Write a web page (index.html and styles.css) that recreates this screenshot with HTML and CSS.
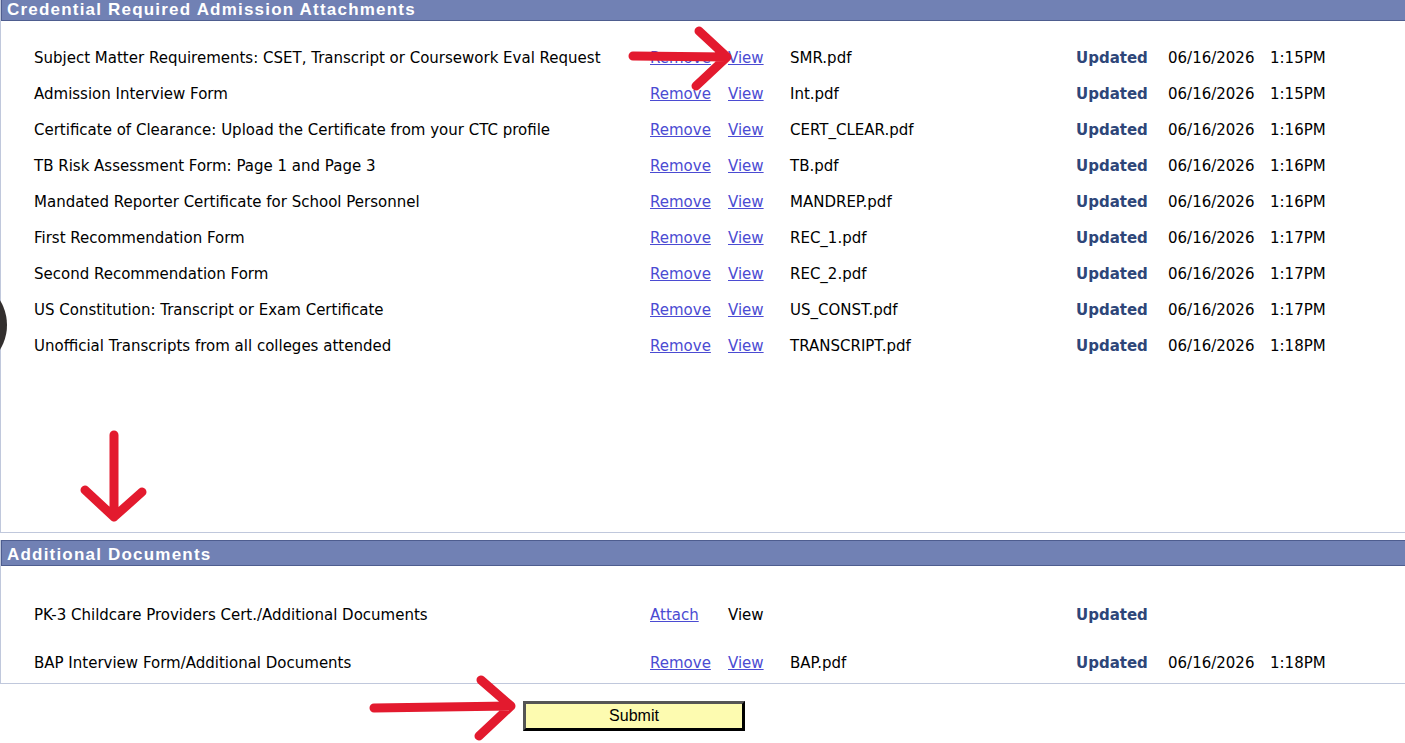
FILE: index.html
```html
<!DOCTYPE html>
<html lang="en">
  <head>
    <meta charset="UTF-8" />
    <meta name="viewport" content="width=device-width, initial-scale=1.0" />
    <title>Admission Attachments</title>
    <link rel="stylesheet" href="styles.css">
  </head>

  <body>
    <div class="page">
      <div class="section section-main">
        <div class="section-title">Credential Required Admission Attachments</div>
        <div class="rows">
          <div class="row">
            <span>Subject Matter Requirements: CSET, Transcript or Coursework Eval Request</span>
            <a href="#">Remove</a><a href="#">View</a><span>SMR.pdf</span>
            <span class="status">Updated</span><span>06/16/2026</span><span>1:15PM</span>
          </div>
          <div class="row">
            <span>Admission Interview Form</span>
            <a href="#">Remove</a><a href="#">View</a><span>Int.pdf</span>
            <span class="status">Updated</span><span>06/16/2026</span><span>1:15PM</span>
          </div>
          <div class="row">
            <span>Certificate of Clearance: Upload the Certificate from your CTC profile</span>
            <a href="#">Remove</a><a href="#">View</a><span>CERT_CLEAR.pdf</span>
            <span class="status">Updated</span><span>06/16/2026</span><span>1:16PM</span>
          </div>
          <div class="row">
            <span>TB Risk Assessment Form: Page 1 and Page 3</span>
            <a href="#">Remove</a><a href="#">View</a><span>TB.pdf</span>
            <span class="status">Updated</span><span>06/16/2026</span><span>1:16PM</span>
          </div>
          <div class="row">
            <span>Mandated Reporter Certificate for School Personnel</span>
            <a href="#">Remove</a><a href="#">View</a><span>MANDREP.pdf</span>
            <span class="status">Updated</span><span>06/16/2026</span><span>1:16PM</span>
          </div>
          <div class="row">
            <span>First Recommendation Form</span>
            <a href="#">Remove</a><a href="#">View</a><span>REC_1.pdf</span>
            <span class="status">Updated</span><span>06/16/2026</span><span>1:17PM</span>
          </div>
          <div class="row">
            <span>Second Recommendation Form</span>
            <a href="#">Remove</a><a href="#">View</a><span>REC_2.pdf</span>
            <span class="status">Updated</span><span>06/16/2026</span><span>1:17PM</span>
          </div>
          <div class="row">
            <span>US Constitution: Transcript or Exam Certificate</span>
            <a href="#">Remove</a><a href="#">View</a><span>US_CONST.pdf</span>
            <span class="status">Updated</span><span>06/16/2026</span><span>1:17PM</span>
          </div>
          <div class="row">
            <span>Unofficial Transcripts from all colleges attended</span>
            <a href="#">Remove</a><a href="#">View</a><span>TRANSCRIPT.pdf</span>
            <span class="status">Updated</span><span>06/16/2026</span><span>1:18PM</span>
          </div>
        </div>
      </div>

      <div class="section section-extra">
        <div class="section-title">Additional Documents</div>
        <div class="rows rows-spaced">
          <div class="row">
            <span>PK-3 Childcare Providers Cert./Additional Documents</span>
            <a href="#">Attach</a><span class="plain">View</span><span></span>
            <span class="status">Updated</span><span></span><span></span>
          </div>
          <div class="row">
            <span>BAP Interview Form/Additional Documents</span>
            <a href="#">Remove</a><a href="#">View</a><span>BAP.pdf</span>
            <span class="status">Updated</span><span>06/16/2026</span><span>1:18PM</span>
          </div>
        </div>
      </div>

      <div class="actions">
        <input type="button" class="submit" value="Submit" />
      </div>
    </div>

    <!-- things drawn on top of the screenshot -->
    <div class="blob"></div>
    <svg class="marks" width="1405" height="743" viewBox="0 0 1405 743">
      <g fill="none" stroke="#e31a2e" stroke-width="9" stroke-linecap="round" stroke-linejoin="round">
        <path d="M633 56 L727 57 M699 31 L727 57 L696 86" />
        <path d="M114 435 L114 517 M85 490 L114 517 L142 492" />
        <path d="M374 708 L511 706 M481 680 L511 706 L479 736" />
      </g>
    </svg>
  </body>
</html>
```

FILE: styles.css
```css
body {
  margin: 0;
  font: normal 15px "DejaVu Sans", Verdana, sans-serif;
  color: #000;
  background-color: #fff;
  overflow: hidden;
}

.page {
  margin-top: -5px;
}

.section {
  border-left: 1px solid #c0c8dc;
  border-bottom: 1px solid #c0c8dc;
}

.section-extra {
  margin-top: 8px;
}

.section-title {
  height: 20px;
  line-height: 20px;
  padding: 4px 0 0 5px;
  background-color: #7181b4;
  border: 1px solid #4e5d8f;
  border-right: none;
  color: #fff;
  font: bold 17px "Liberation Sans", Arial, sans-serif;
  letter-spacing: 1.2px;
}

.section-extra .section-title {
  margin-top: -1px;
}

.rows {
  padding: 19px 0 168px 33px;
}

.rows-spaced {
  padding: 31px 0 2px 33px;
  display: flex;
  flex-direction: column;
  gap: 12px;
}

.row {
  display: grid;
  grid-template-columns: 616px 78px 62px 286px 92px 102px auto;
  height: 36px;
  align-items: center;
  white-space: nowrap;
}

.row a {
  color: #4b4bd2;
  text-decoration: underline;
}

.status {
  font-weight: bold;
  color: #2e4679;
}

.actions {
  padding: 17px 0 0 523px;
}

.submit {
  width: 222px;
  height: 30px;
  background-color: #fdfbb0;
  border: 3px solid #000;
  border-top-color: #555;
  border-left-color: #555;
  font: normal 16px "Liberation Sans", Arial, sans-serif;
  color: #000;
  cursor: pointer;
}

.blob {
  position: absolute;
  left: -87px;
  top: 278px;
  width: 94px;
  height: 94px;
  border-radius: 50%;
  background-color: #332f2e;
}

.marks {
  position: absolute;
  left: 0;
  top: 0;
  pointer-events: none;
}
```
